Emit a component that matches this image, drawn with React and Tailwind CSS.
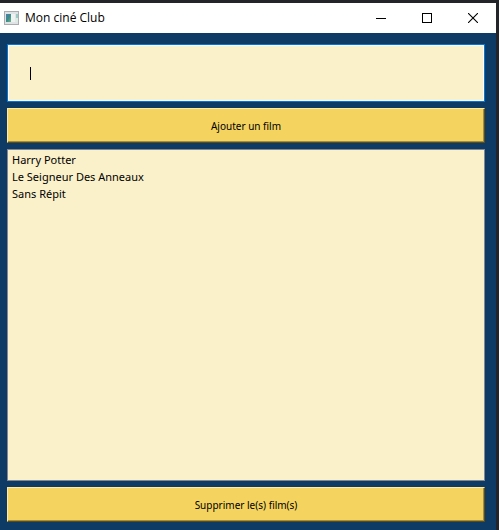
import React, { useState } from "react";

const films = ["Harry Potter", "Le Seigneur Des Anneaux", "Sans Répit"];

function AppIcon() {
  return (
    <svg width="16" height="14" viewBox="0 0 16 14" aria-hidden="true" shapeRendering="crispEdges">
      <defs>
        <linearGradient id="pane" x1="0" y1="0" x2="1" y2="1">
          <stop offset="0" stopColor="#4a7fae" />
          <stop offset="0.5" stopColor="#3d8a8a" />
          <stop offset="1" stopColor="#6fb487" />
        </linearGradient>
      </defs>
      <rect width="15" height="14" fill="#a9adb0" />
      <rect x="1" y="1" width="13" height="12" fill="#dfe3e5" />
      <rect x="2" y="3" width="5" height="8" fill="url(#pane)" />
      <rect x="7" y="3" width="4" height="8" fill="#f0f2f2" />
      <rect x="12" y="3" width="2" height="4" fill="#9ccbc6" />
      <rect x="11" y="7" width="3" height="4" fill="#dcebe4" />
    </svg>
  );
}

function WindowButton({ label, children }) {
  return (
    <button type="button" aria-label={label} className="flex h-7 w-[46px] items-center justify-center">
      <svg width="10" height="10" viewBox="0 0 10 10" fill="none" stroke="#000" aria-hidden="true">
        {children}
      </svg>
    </button>
  );
}

function ActionButton({ children }) {
  return (
    <button
      type="button"
      className="h-[35px] w-full shrink-0 border border-t-[#ffeaa0] border-r-[#5c4c18] border-b-[#5c4c18] border-l-[#ffeaa0] bg-[#f4d35e] pt-px text-[10px] leading-4 text-black shadow-[inset_-1px_-1px_0_#a38d3f]"
    >
      {children}
    </button>
  );
}

export default function App() {
  const [title, setTitle] = useState("");
  return (
    <div className="flex min-h-screen flex-col bg-[#22242a] pt-[3px] pr-[3px] font-['Noto_Sans',sans-serif] text-xs text-black">
      <header className="flex h-[30px] shrink-0 items-center bg-white pl-1">
        <AppIcon />
        <h1 className="ml-[5px] flex-1 font-['Open_Sans',sans-serif]">Mon ciné Club</h1>
        <WindowButton label="Réduire">
          <path d="M0 5.5h10" shapeRendering="crispEdges" />
        </WindowButton>
        <WindowButton label="Agrandir">
          <path d="M0.5 0.5h9v9h-9z" shapeRendering="crispEdges" />
        </WindowButton>
        <WindowButton label="Fermer">
          <path d="M0 0l10 10M10 0l-10 10" strokeWidth="1.1" />
        </WindowButton>
      </header>
      <main className="flex flex-1 flex-col gap-1.5 bg-[#0d3b66] pt-[11px] pr-[11px] pb-2 pl-[7px]">
        <div className="relative flex shrink-0">
          <input
            type="text"
            aria-label="Titre du film"
            value={title}
            onChange={(event) => setTitle(event.target.value)}
            className="h-[58px] w-full border border-[#0078d7] bg-[#faf0ca] px-[22px] shadow-[inset_0_0_0_1px_#ffffff] outline-none"
          />
          <span className="absolute top-[23px] left-[23px] h-[13px] w-px bg-black" />
        </div>
        <ActionButton>Ajouter un film</ActionButton>
        <ul className="flex-1 border border-[#828790] bg-[#faf0ca] px-1 py-px text-[11px] leading-[17px]">
          {films.map((film) => (
            <li key={film}>{film}</li>
          ))}
        </ul>
        <ActionButton>Supprimer le(s) film(s)</ActionButton>
      </main>
    </div>
  );
}
